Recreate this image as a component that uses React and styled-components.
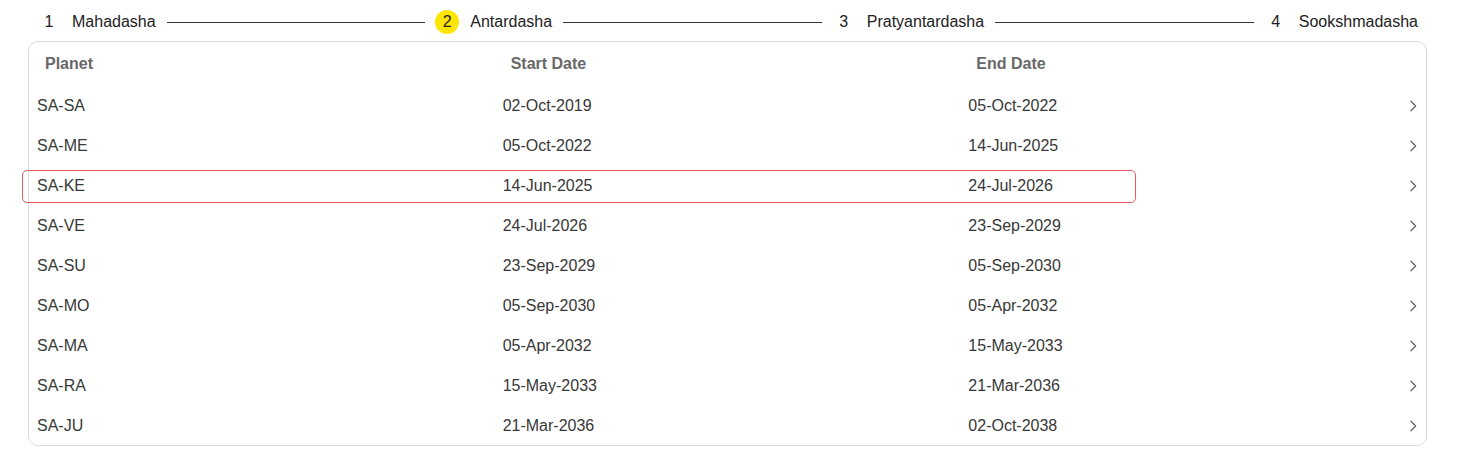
import React from "react";
import styled, { createGlobalStyle, css } from "styled-components";

const GlobalStyle = createGlobalStyle`
  body {
    margin: 0;
    background: #ffffff;
    font-family: "Liberation Sans", Arial, Helvetica, sans-serif;
  }
`;

const Page = styled.div`
  padding: 10px 31px 0 28px;
  width: 1399px;
`;

const Stepper = styled.div`
  display: flex;
  align-items: center;
  height: 24px;
  padding: 0 9px;
  margin-bottom: 7px;
`;

const Step = styled.div`
  display: flex;
  align-items: center;
  gap: 11px;
  flex-shrink: 0;
`;

const StepNum = styled.div`
  width: 24px;
  height: 24px;
  border-radius: 50%;
  display: flex;
  align-items: center;
  justify-content: center;
  font-size: 16px;
  color: #222;
  ${(props) =>
    props.active &&
    css`
      background-color: #ffe500;
    `}
`;

const StepLabel = styled.span`
  font-size: 16px;
  color: #222;
  white-space: nowrap;
`;

const StepLine = styled.div`
  flex: 1;
  height: 1px;
  background: #333;
  margin: 0 10px 0 11px;
`;

const Card = styled.div`
  border: 1px solid #dadada;
  border-radius: 10px;
`;

const HeaderRow = styled.div`
  display: grid;
  grid-template-columns: 1fr 1fr 1fr;
  height: 43px;
  align-items: center;
`;

const HeaderCell = styled.div`
  padding-left: 16px;
  font-size: 16px;
  font-weight: bold;
  color: #686868;
`;

const Row = styled.div`
  position: relative;
  display: grid;
  grid-template-columns: 1fr 1fr 1fr;
  height: 40px;
  align-items: center;
  ${(props) =>
    props.selected &&
    css`
      &::before {
        content: "";
        position: absolute;
        left: -7px;
        top: 4.5px;
        width: 1114px;
        height: 33.5px;
        box-sizing: border-box;
        border: 1.75px solid #e65b61;
        border-radius: 5px;
        pointer-events: none;
      }
    `}
`;

const Cell = styled.div`
  padding: 2px 0 0 8px;
  font-size: 16px;
  color: #383838;
`;

const LastCell = styled(Cell)`
  display: flex;
  align-items: center;
  justify-content: space-between;
  padding-right: 9px;
`;

const Chevron = () => (
  <svg width="8" height="12" viewBox="0 0 8 12" fill="none">
    <path
      d="M2 1.2 L6.6 6 L2 10.8"
      stroke="#6a6a6a"
      strokeWidth="1.4"
      strokeLinecap="round"
      strokeLinejoin="round"
    />
  </svg>
);

const steps = ["Mahadasha", "Antardasha", "Pratyantardasha", "Sookshmadasha"];

const rows = [
  ["SA-SA", "02-Oct-2019", "05-Oct-2022"],
  ["SA-ME", "05-Oct-2022", "14-Jun-2025"],
  ["SA-KE", "14-Jun-2025", "24-Jul-2026"],
  ["SA-VE", "24-Jul-2026", "23-Sep-2029"],
  ["SA-SU", "23-Sep-2029", "05-Sep-2030"],
  ["SA-MO", "05-Sep-2030", "05-Apr-2032"],
  ["SA-MA", "05-Apr-2032", "15-May-2033"],
  ["SA-RA", "15-May-2033", "21-Mar-2036"],
  ["SA-JU", "21-Mar-2036", "02-Oct-2038"],
];

const App = () => {
  return (
    <Page>
      <GlobalStyle />
      <Stepper>
        {steps.map((label, i) => (
          <React.Fragment key={label}>
            <Step>
              <StepNum active={i === 1}>{i + 1}</StepNum>
              <StepLabel>{label}</StepLabel>
            </Step>
            {i < steps.length - 1 && <StepLine />}
          </React.Fragment>
        ))}
      </Stepper>
      <Card>
        <HeaderRow>
          <HeaderCell>Planet</HeaderCell>
          <HeaderCell>Start Date</HeaderCell>
          <HeaderCell>End Date</HeaderCell>
        </HeaderRow>
        {rows.map((r, i) => (
          <Row key={r[0]} selected={i === 2}>
            <Cell>{r[0]}</Cell>
            <Cell>{r[1]}</Cell>
            <LastCell>
              {r[2]}
              <Chevron />
            </LastCell>
          </Row>
        ))}
      </Card>
    </Page>
  );
};

export default App;
